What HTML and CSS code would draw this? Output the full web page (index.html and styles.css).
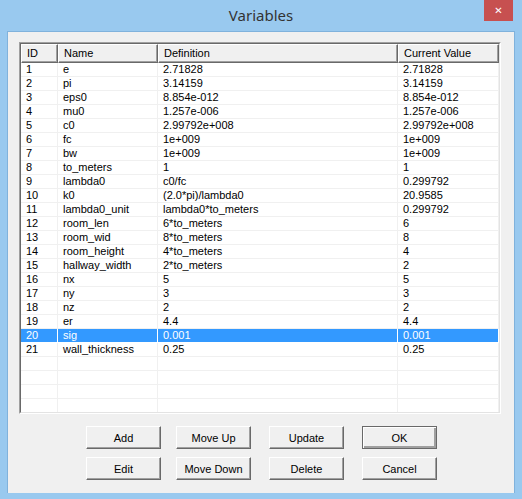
FILE: index.html
```html
<!DOCTYPE html>
<html lang="en">
<head>
<title>Variables</title>
<link rel="stylesheet" href="styles.css">
</head>
<body>
<div class="window">
<div class="titlebar">
<span class="title">Variables</span>
<button class="close" title="Close">&#x2715;</button>
</div>
<div class="client">
<div class="list">
<div class="inner">
<div class="row head"><div>ID</div><div>Name</div><div>Definition</div><div>Current Value</div></div>
<div class="row"><div>1</div><div>e</div><div>2.71828</div><div>2.71828</div></div>
<div class="row"><div>2</div><div>pi</div><div>3.14159</div><div>3.14159</div></div>
<div class="row"><div>3</div><div>eps0</div><div>8.854e-012</div><div>8.854e-012</div></div>
<div class="row"><div>4</div><div>mu0</div><div>1.257e-006</div><div>1.257e-006</div></div>
<div class="row"><div>5</div><div>c0</div><div>2.99792e+008</div><div>2.99792e+008</div></div>
<div class="row"><div>6</div><div>fc</div><div>1e+009</div><div>1e+009</div></div>
<div class="row"><div>7</div><div>bw</div><div>1e+009</div><div>1e+009</div></div>
<div class="row"><div>8</div><div>to_meters</div><div>1</div><div>1</div></div>
<div class="row"><div>9</div><div>lambda0</div><div>c0/fc</div><div>0.299792</div></div>
<div class="row"><div>10</div><div>k0</div><div>(2.0*pi)/lambda0</div><div>20.9585</div></div>
<div class="row"><div>11</div><div>lambda0_unit</div><div>lambda0*to_meters</div><div>0.299792</div></div>
<div class="row"><div>12</div><div>room_len</div><div>6*to_meters</div><div>6</div></div>
<div class="row"><div>13</div><div>room_wid</div><div>8*to_meters</div><div>8</div></div>
<div class="row"><div>14</div><div>room_height</div><div>4*to_meters</div><div>4</div></div>
<div class="row"><div>15</div><div>hallway_width</div><div>2*to_meters</div><div>2</div></div>
<div class="row"><div>16</div><div>nx</div><div>5</div><div>5</div></div>
<div class="row"><div>17</div><div>ny</div><div>3</div><div>3</div></div>
<div class="row"><div>18</div><div>nz</div><div>2</div><div>2</div></div>
<div class="row"><div>19</div><div>er</div><div>4.4</div><div>4.4</div></div>
<div class="row selected"><div>20</div><div>sig</div><div>0.001</div><div>0.001</div></div>
<div class="row"><div>21</div><div>wall_thickness</div><div>0.25</div><div>0.25</div></div>
<div class="row"><div></div><div></div><div></div><div></div></div>
<div class="row"><div></div><div></div><div></div><div></div></div>
<div class="row"><div></div><div></div><div></div><div></div></div>
<div class="row"><div></div><div></div><div></div><div></div></div>
</div>
</div>
<div class="buttons">
<div class="btnrow">
<button class="btn b1">Add</button><button class="btn b2">Move Up</button><button class="btn b3">Update</button><button class="btn b4 default">OK</button>
</div>
<div class="btnrow">
<button class="btn b1">Edit</button><button class="btn b2">Move Down</button><button class="btn b3">Delete</button><button class="btn b4">Cancel</button>
</div>
</div>
</div>
</div>
</body>
</html>
```
FILE: styles.css
```css
body {
margin: 0;
font-family: "Liberation Sans", Arial, sans-serif;
font-size: 11px;
}
.window {
width: 522px;
height: 499px;
background-color: #99c9ef;
box-sizing: border-box;
display: flex;
flex-direction: column;
}
.titlebar {
height: 31px;
display: flex;
justify-content: center;
position: relative;
}
.title {
font-family: "Noto Sans", "Open Sans", sans-serif;
font-size: 15px;
color: #333;
line-height: 31px;
}
.close {
position: absolute;
top: 0;
right: 9px;
width: 29px;
height: 21px;
border: 0;
padding: 0;
background-color: #c75050;
color: #fff;
font-family: "DejaVu Sans", sans-serif;
font-size: 10px;
line-height: 21px;
}
.client {
margin: 0 7px 0 7px;
height: 462px;
background-color: #f0f0f0;
border: 1px solid #80b2dc;
border-bottom: 0;
box-sizing: border-box;
padding: 10px 0 0 11px;
}
.list {
width: 482px;
height: 372px;
border: 1px solid;
border-color: #a0a0a0 #fff #fff #a0a0a0;
box-sizing: border-box;
}
.inner {
height: 100%;
border: 1px solid;
border-color: #696969 #e3e3e3 #e3e3e3 #696969;
box-sizing: border-box;
background-color: #fff;
overflow: hidden;
}
.row {
display: grid;
grid-template-columns: 37px 100px 240px 101px;
height: 14px;
}
.row > div {
border-right: 1px solid #f0f0f0;
border-bottom: 1px solid #f0f0f0;
padding-left: 5px;
line-height: 13px;
white-space: nowrap;
overflow: hidden;
}
.row.head {
height: 19px;
background-color: #f0f0f0;
}
.row.head > div {
border-top: 1px solid #fff;
border-left: 1px solid #fff;
border-right: 1px solid #696969;
border-bottom: 1px solid #696969;
box-shadow: inset -1px -1px 0 #a0a0a0;
line-height: 16px;
padding-left: 5px;
}
.row.selected > div {
background-color: #3399ff;
color: #fff;
border-right-color: #fff;
border-bottom-color: #fff;
}
.buttons {
display: flex;
flex-direction: column;
gap: 8px;
padding-top: 12px;
}
.btnrow {
display: flex;
}
.btn {
width: 75px;
height: 23px;
padding: 0;
font-family: "Liberation Sans", Arial, sans-serif;
font-size: 11px;
color: #000;
background-color: #f0f0f0;
border: 1px solid;
border-color: #fff #696969 #696969 #fff;
box-shadow: inset -1px -1px 0 #a0a0a0;
}
.b1 {
margin-left: 67px;
}
.b2 {
margin-left: 15px;
}
.b3 {
margin-left: 18px;
}
.b4 {
margin-left: 18px;
}
.default {
border-color: #696969;
box-shadow: inset 1px 1px 0 #fff, inset -2px -2px 0 #a0a0a0;
}
```
